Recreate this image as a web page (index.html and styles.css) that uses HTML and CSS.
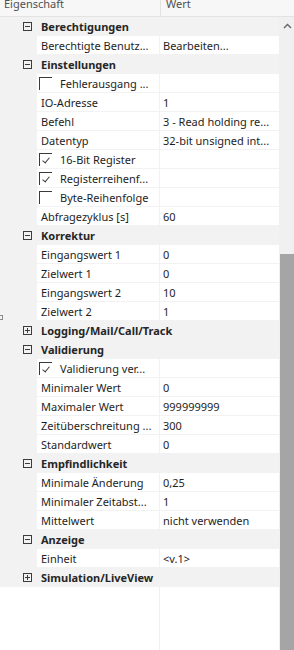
FILE: index.html
```html
<!DOCTYPE html>
<html lang="de">
<head>
    <meta charset="UTF-8">
    <meta name="viewport" content="width=device-width, initial-scale=1.0">
    <link rel="stylesheet" href="styles.css">
    <title>Eigenschaften</title>
</head>
<body>
    <div class="panel">
        <div class="hdr">
            <div class="hdr-name"><span>Eigenschaft</span></div>
            <div class="hdr-val"><span>Wert</span></div>
        </div>

        <div class="main">
            <div class="list">
                <div class="cat"><span class="exp minus"></span><span class="cat-name">Berechtigungen</span></div>
                <div class="prop"><div class="name">Berechtigte Benutz...</div><div class="val">Bearbeiten...</div></div>

                <div class="cat"><span class="exp minus"></span><span class="cat-name">Einstellungen</span></div>
                <div class="prop"><div class="name"><span class="cb"></span>Fehlerausgang ...</div><div class="val"></div></div>
                <div class="prop"><div class="name">IO-Adresse</div><div class="val">1</div></div>
                <div class="prop"><div class="name">Befehl</div><div class="val">3 - Read holding re...</div></div>
                <div class="prop"><div class="name">Datentyp</div><div class="val">32-bit unsigned int...</div></div>
                <div class="prop"><div class="name"><span class="cb checked"></span>16-Bit Register</div><div class="val"></div></div>
                <div class="prop"><div class="name"><span class="cb checked"></span>Registerreihenf...</div><div class="val"></div></div>
                <div class="prop"><div class="name"><span class="cb"></span>Byte-Reihenfolge</div><div class="val"></div></div>
                <div class="prop"><div class="name">Abfragezyklus [s]</div><div class="val">60</div></div>

                <div class="cat"><span class="exp minus"></span><span class="cat-name">Korrektur</span></div>
                <div class="prop"><div class="name">Eingangswert 1</div><div class="val">0</div></div>
                <div class="prop"><div class="name">Zielwert 1</div><div class="val">0</div></div>
                <div class="prop"><div class="name">Eingangswert 2</div><div class="val">10</div></div>
                <div class="prop"><div class="name">Zielwert 2</div><div class="val">1</div></div>

                <div class="cat"><span class="exp plus"></span><span class="cat-name">Logging/Mail/Call/Track</span></div>

                <div class="cat"><span class="exp minus"></span><span class="cat-name">Validierung</span></div>
                <div class="prop"><div class="name"><span class="cb checked"></span>Validierung ver...</div><div class="val"></div></div>
                <div class="prop"><div class="name">Minimaler Wert</div><div class="val">0</div></div>
                <div class="prop"><div class="name">Maximaler Wert</div><div class="val">999999999</div></div>
                <div class="prop"><div class="name">Zeitüberschreitung ...</div><div class="val">300</div></div>
                <div class="prop"><div class="name">Standardwert</div><div class="val">0</div></div>

                <div class="cat"><span class="exp minus"></span><span class="cat-name">Empfindlichkeit</span></div>
                <div class="prop"><div class="name">Minimale Änderung</div><div class="val">0,25</div></div>
                <div class="prop"><div class="name">Minimaler Zeitabst...</div><div class="val">1</div></div>
                <div class="prop"><div class="name">Mittelwert</div><div class="val">nicht verwenden</div></div>

                <div class="cat"><span class="exp minus"></span><span class="cat-name">Anzeige</span></div>
                <div class="prop"><div class="name">Einheit</div><div class="val">&lt;v.1&gt;</div></div>

                <div class="cat"><span class="exp plus"></span><span class="cat-name">Simulation/LiveView</span></div>

                <div class="filler"></div>
                <span class="grip"></span>
            </div>

            <div class="scroll">
                <div class="arrow">
                    <svg width="9" height="6" viewBox="0 0 9 6"><path d="M1 5L4.5 1.5L8 5" fill="none" stroke="#606060" stroke-width="1.3"/></svg>
                </div>
                <div class="thumb"></div>
            </div>
        </div>
    </div>
</body>
</html>
```

FILE: styles.css
```css
html, body {
    height: 100%;
}

body {
    margin: 0;
    font-family: "Noto Sans", "Open Sans", sans-serif;
    font-size: 11px;
    color: #1e1e1e;
    background-color: #fff;
}

.panel {
    display: flex;
    flex-direction: column;
    height: 100vh;
    overflow: hidden;
}

/* column header, scrolled up a little */
.hdr {
    display: flex;
    height: 16px;
    border-bottom: 1px solid #e3e3e3;
    background-color: #f7f7f7;
    color: #505050;
    overflow: hidden;
    flex-shrink: 0;
}

.hdr span {
    display: block;
    margin-top: -4px;
    line-height: 16px;
}

.hdr-name {
    width: 160px;
    padding-left: 4px;
    box-sizing: border-box;
}

.hdr-val {
    flex: 1;
    border-left: 1px solid #e3e3e3;
    padding-left: 5px;
}

.main {
    flex: 1;
    display: flex;
    min-height: 0;
}

.list {
    flex: 1;
    display: flex;
    flex-direction: column;
    position: relative;
}

.cat {
    display: flex;
    align-items: center;
    height: 19px;
    background-color: #f2f2f2;
    font-weight: bold;
    color: #262626;
}

.exp {
    width: 7px;
    height: 7px;
    margin-left: 23px;
    border: 1px solid #3c3c3c;
    position: relative;
    flex-shrink: 0;
}

.exp::before {
    content: "";
    position: absolute;
    left: 1px;
    top: 3px;
    width: 5px;
    height: 1px;
    background-color: #3c3c3c;
}

.exp.plus::after {
    content: "";
    position: absolute;
    left: 3px;
    top: 1px;
    width: 1px;
    height: 5px;
    background-color: #3c3c3c;
}

.cat-name {
    margin-left: 9px;
    white-space: nowrap;
}

.prop {
    display: flex;
    height: 19px;
    padding-left: 37px;
    background-color: #f2f2f2;
}

.name, .val {
    height: 18px;
    display: flex;
    align-items: center;
    background-color: #fff;
    white-space: nowrap;
    overflow: hidden;
}

.name {
    width: 122px;
    padding-left: 4px;
    box-sizing: border-box;
}

.val {
    flex: 1;
    margin-left: 1px;
    padding-left: 3px;
}

.cb {
    width: 12px;
    height: 12px;
    margin-left: -2px;
    margin-right: 8px;
    border-top: 1px solid #3a3a3a;
    border-left: 1px solid #3a3a3a;
    flex-shrink: 0;
    position: relative;
}

.cb.checked::after {
    content: "";
    position: absolute;
    left: 4px;
    top: 2px;
    width: 3px;
    height: 6px;
    border-right: 1px solid #3a3a3a;
    border-bottom: 1px solid #3a3a3a;
    transform: rotate(40deg);
}

.filler {
    flex: 1;
    margin-left: 159px;
    border-left: 1px solid #f0f0f0;
}

.grip {
    position: absolute;
    left: -1px;
    top: 298px;
    width: 2px;
    height: 3px;
    border: 1px solid #8a8a8a;
}

.scroll {
    width: 15px;
    display: flex;
    flex-direction: column;
    background-color: #f0f0f0;
}

.arrow {
    height: 17px;
    display: flex;
    align-items: center;
    justify-content: center;
    padding-left: 1px;
}

.thumb {
    flex: 1;
    margin-top: 220px;
    margin-left: 1px;
    background-color: #a5a5a5;
}
```
